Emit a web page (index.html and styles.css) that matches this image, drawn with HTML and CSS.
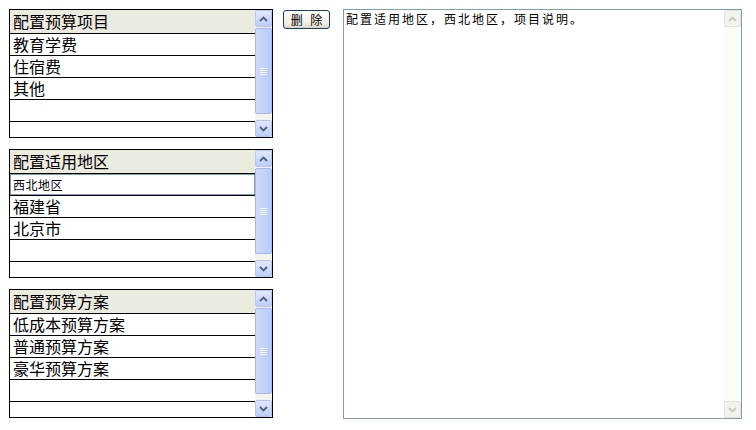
FILE: index.html
```html
<!DOCTYPE html>
<html lang="zh-CN">
<head>
<meta charset="utf-8">
<title>配置</title>
<link rel="stylesheet" href="styles.css">
</head>
<body>
<div class="page">
  <div class="lists">
    <div class="listbox">
      <div class="list">
        <div class="head">配置预算项目</div>
        <div class="row">教育学费</div>
        <div class="row">住宿费</div>
        <div class="row">其他</div>
        <div class="row"></div>
        <div class="row last"></div>
      </div>
      <div class="vscroll">
        <div class="sbtn"><svg width="9" height="6" viewBox="0 0 9 6"><path d="M1 5 L4.5 1.5 L8 5" fill="none" stroke="#4d6185" stroke-width="1.8"/></svg></div>
        <div class="track"><div class="thumb"><svg width="7" height="7" viewBox="0 0 7 7"><path d="M0 0.5H7M0 2.5H7M0 4.5H7M0 6.5H7" stroke="#eef3fe" stroke-width="1"/></svg></div></div>
        <div class="sbtn"><svg width="9" height="6" viewBox="0 0 9 6"><path d="M1 1 L4.5 4.5 L8 1" fill="none" stroke="#4d6185" stroke-width="1.8"/></svg></div>
      </div>
    </div>

    <div class="listbox">
      <div class="list">
        <div class="head">配置适用地区</div>
        <div class="row editing"><input class="cell-input" type="text" value="西北地区"></div>
        <div class="row">福建省</div>
        <div class="row">北京市</div>
        <div class="row"></div>
        <div class="row last"></div>
      </div>
      <div class="vscroll">
        <div class="sbtn"><svg width="9" height="6" viewBox="0 0 9 6"><path d="M1 5 L4.5 1.5 L8 5" fill="none" stroke="#4d6185" stroke-width="1.8"/></svg></div>
        <div class="track"><div class="thumb"><svg width="7" height="7" viewBox="0 0 7 7"><path d="M0 0.5H7M0 2.5H7M0 4.5H7M0 6.5H7" stroke="#eef3fe" stroke-width="1"/></svg></div></div>
        <div class="sbtn"><svg width="9" height="6" viewBox="0 0 9 6"><path d="M1 1 L4.5 4.5 L8 1" fill="none" stroke="#4d6185" stroke-width="1.8"/></svg></div>
      </div>
    </div>

    <div class="listbox">
      <div class="list">
        <div class="head">配置预算方案</div>
        <div class="row">低成本预算方案</div>
        <div class="row">普通预算方案</div>
        <div class="row">豪华预算方案</div>
        <div class="row"></div>
        <div class="row last"></div>
      </div>
      <div class="vscroll">
        <div class="sbtn"><svg width="9" height="6" viewBox="0 0 9 6"><path d="M1 5 L4.5 1.5 L8 5" fill="none" stroke="#4d6185" stroke-width="1.8"/></svg></div>
        <div class="track"><div class="thumb"><svg width="7" height="7" viewBox="0 0 7 7"><path d="M0 0.5H7M0 2.5H7M0 4.5H7M0 6.5H7" stroke="#eef3fe" stroke-width="1"/></svg></div></div>
        <div class="sbtn"><svg width="9" height="6" viewBox="0 0 9 6"><path d="M1 1 L4.5 4.5 L8 1" fill="none" stroke="#4d6185" stroke-width="1.8"/></svg></div>
      </div>
    </div>
  </div>

  <button class="btn" type="button">删 除</button>

  <div class="memo">
    <div class="memo-text">配置适用地区，西北地区，项目说明。</div>
    <div class="vscroll disabled">
      <div class="sbtn"><svg width="9" height="6" viewBox="0 0 9 6"><path d="M1 5 L4.5 1.5 L8 5" fill="none" stroke="#c9c7ba" stroke-width="1.8"/></svg></div>
      <div class="track"></div>
      <div class="sbtn"><svg width="9" height="6" viewBox="0 0 9 6"><path d="M1 1 L4.5 4.5 L8 1" fill="none" stroke="#c9c7ba" stroke-width="1.8"/></svg></div>
    </div>
  </div>
</div>
</body>
</html>
```

FILE: styles.css
```css
html, body {
  margin: 0;
  padding: 0;
  background: #ffffff;
}

body {
  font-family: "Noto Sans CJK SC", "Liberation Sans", sans-serif;
  color: #000;
}

.page {
  display: flex;
  align-items: flex-start;
  padding: 9px 0 0 9px;
}

.lists {
  display: flex;
  flex-direction: column;
  gap: 11px;
  width: 264px;
}

.listbox {
  display: flex;
  height: 127px;
  border: 1px solid #000;
  background: #fff;
}

.list {
  flex: 1;
  min-width: 0;
  display: flex;
  flex-direction: column;
  overflow: hidden;
}

.head,
.row {
  font-size: 16px;
  padding-left: 3px;
  white-space: nowrap;
  border-bottom: 1px solid #000;
  box-sizing: border-box;
}

.head {
  height: 24px;
  line-height: 22px;
  background: #ecebe0;
}

.row {
  height: 22px;
  line-height: 20px;
}

.row.last {
  height: 15px;
  border-bottom: none;
}

.row.editing {
  padding: 0;
  border-bottom: 1px solid #000;
}

.cell-input {
  display: block;
  width: 100%;
  height: 21px;
  box-sizing: border-box;
  margin: 0;
  border: 1px solid #7f9db9;
  padding: 0 0 0 2px;
  font-family: "Noto Sans CJK SC", sans-serif;
  font-size: 12px;
  letter-spacing: 0.5px;
  line-height: 19px;
  color: #000;
  outline: none;
}

/* XP style scrollbar */
.vscroll {
  width: 17px;
  display: flex;
  flex-direction: column;
  background: #f4f3ee;
}

.sbtn {
  height: 17px;
  box-sizing: border-box;
  display: flex;
  align-items: center;
  justify-content: center;
  background: linear-gradient(#e1e9fd, #bccdf8);
  border: 1px solid #b3c5f3;
  border-radius: 2px;
}

.track {
  flex: 1;
  display: flex;
  flex-direction: column;
  padding-top: 1px;
}

.thumb {
  height: 86px;
  box-sizing: border-box;
  display: flex;
  align-items: center;
  justify-content: center;
  background: linear-gradient(to right, #cddbfc, #b9cbf7);
  border: 1px solid #a3b8ec;
  border-radius: 2px;
}

.vscroll.disabled {
  background: #fbfbf8;
}

.vscroll.disabled .sbtn {
  background: #f3f3ee;
  border: 1px solid #e6e4da;
}

/* delete button */
.btn {
  margin: 1px 0 0 10px;
  width: 47px;
  height: 19px;
  padding: 0;
  box-sizing: border-box;
  border: 1px solid #1c3c6e;
  border-radius: 3px;
  background: linear-gradient(#ffffff, #f1efe6 70%, #d9d4c8);
  font-family: "Noto Sans CJK SC", sans-serif;
  font-size: 12px;
  word-spacing: 5px;
  line-height: 16px;
  color: #000;
}

/* memo (textarea) */
.memo {
  margin-left: 13px;
  width: 399px;
  height: 410px;
  box-sizing: border-box;
  border: 1px solid #7f9db9;
  display: flex;
  background: #fff;
}

.memo-text {
  flex: 1;
  padding: 1px 0 0 2px;
  font-size: 12px;
  letter-spacing: 2px;
  line-height: 16px;
}
```
